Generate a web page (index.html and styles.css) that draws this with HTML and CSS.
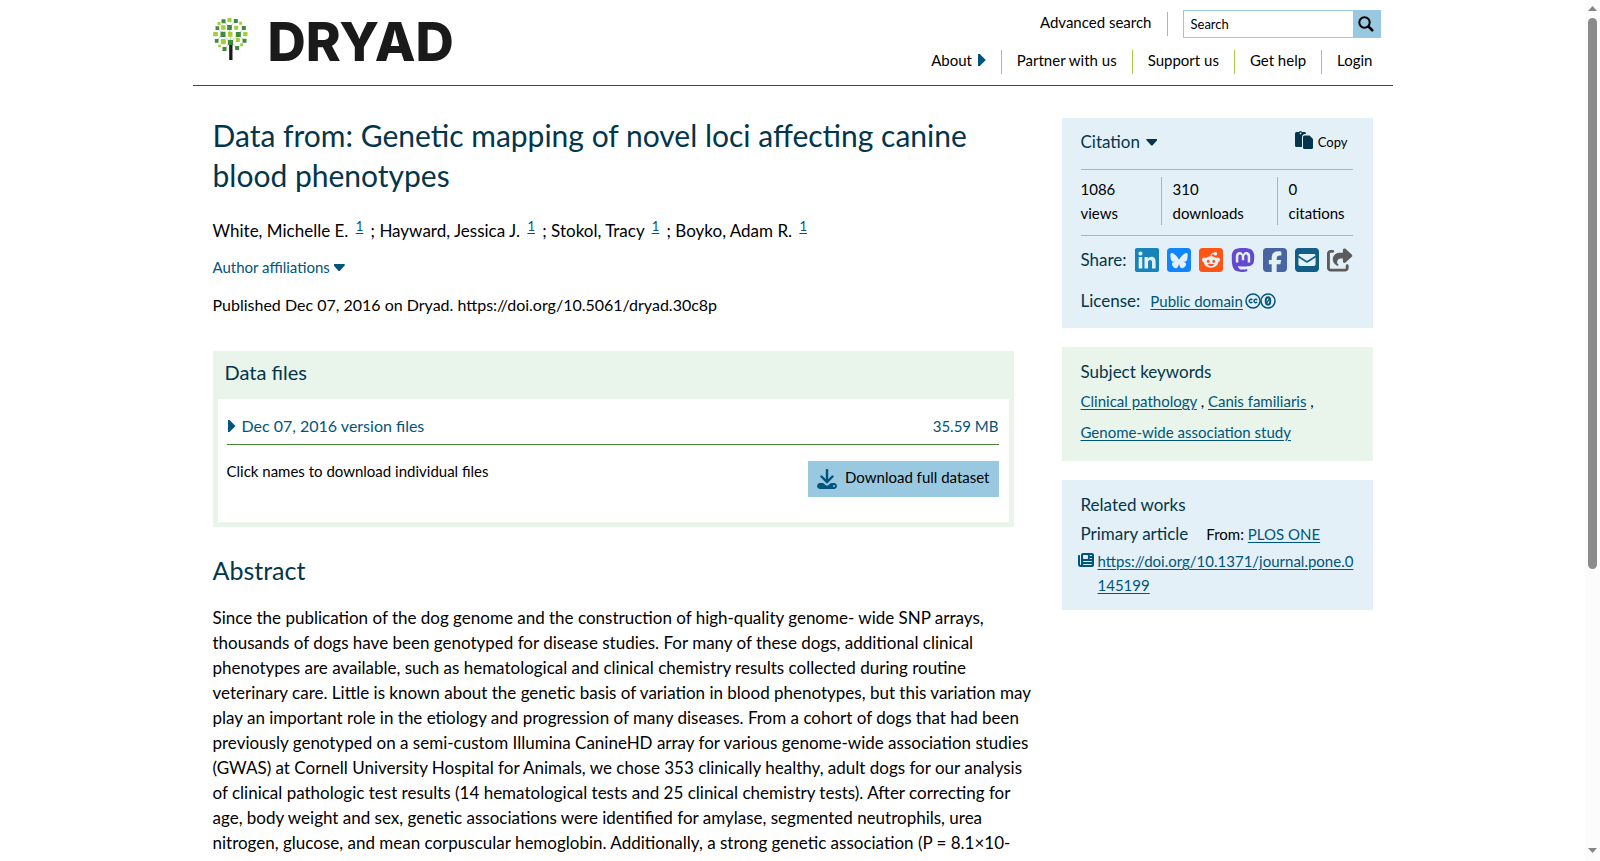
FILE: index.html
```html
<!DOCTYPE html>
<html lang="en">
<head>
  <meta charset="UTF-8">
  <meta name="viewport" content="width=device-width, initial-scale=1">
  <title>Dryad | Data from: Genetic mapping of novel loci affecting canine blood phenotypes</title>
  <link rel="stylesheet" href="styles.css">
</head>
<body>
  <header class="site-header">
    <a class="logo" href="#" aria-label="Dryad home">
      <svg class="logo-tree" viewBox="69 54 104 126" aria-hidden="true">
        <path d="M100 64 118 82 136 62M81 84l17 18M161 84l-17 19M79 122l19-20M163 122l-19-19M118 82l3 45M103 147l18-20 20 17M98 102l23 25 23-24" fill="none" stroke="#8fbf7a" stroke-width="2"/>
        <path fill="#1a1a1a" d="M117 133h10v47h-10z"/>
        <path fill="#a5cd39" d="M112 54h12v12h-12zM82 66h9v9h-9zM147 65h9v9h-9zM93 76h13v13H93zM132 77h12v12h-12zM69 96h14v13H69zM113 95h14v15h-14zM159 96h13v13h-13zM92 117h15v16H92zM137 114h12v12h-12zM84 134h8v8h-8zM150 130h9v9h-9z"/>
        <path fill="#3f8a3f" d="M94 58h12v12H94zM131 57h12v12h-12zM76 79h11v11H76zM111 75h14v15h-14zM155 78h12v12h-12zM91 95h15v16H91zM137 96h15v15h-15zM74 117h11v11H74zM157 116h12v12h-12zM113 120h16v15h-16zM97 141h12v12H97zM135 138h12v12h-12z"/>
      </svg>
      <span class="logo-text">DRYAD</span>
    </a>
    <div class="header-nav">
      <div class="nav-row">
        <a href="#">Advanced search</a>
        <form class="search">
          <input type="search" placeholder="Search" aria-label="Search">
          <button type="button" aria-label="Submit search">
            <svg viewBox="0 0 16 16" fill="none" stroke="#000" stroke-width="2"><circle cx="6.5" cy="6.5" r="5.2"/><path d="M10.3 10.3 15 15" stroke-width="2.6"/></svg>
          </button>
        </form>
      </div>
      <nav class="nav-row">
        <button class="menu" type="button">About <i class="caret-right"></i></button>
        <a href="#">Partner with us</a>
        <a href="#">Support us</a>
        <a href="#">Get help</a>
        <a href="#">Login</a>
      </nav>
    </div>
  </header>

  <div class="page">
    <main>
      <h1>Data from: Genetic mapping of novel loci affecting canine blood phenotypes</h1>
      <p class="authors">
        <span>White, Michelle E. <a href="#">1</a></span>
        <span>; Hayward, Jessica J. <a href="#">1</a></span>
        <span>; Stokol, Tracy <a href="#">1</a></span>
        <span>; Boyko, Adam R. <a href="#">1</a></span>
      </p>
      <button class="affiliations" type="button">Author affiliations <i class="caret-down"></i></button>
      <p class="published">Published Dec 07, 2016 on Dryad. https://doi.org/10.5061/dryad.30c8p</p>

      <section class="files">
        <h2>Data files</h2>
        <div class="files-inner">
          <button class="version" type="button">
            <i class="caret-right"></i>
            <span class="version-name">Dec 07, 2016 version files</span>
            <span>35.59 MB</span>
          </button>
          <div class="download">
            <p>Click names to download individual files</p>
            <button type="button">
              <svg viewBox="0 0 20 20" aria-hidden="true"><path d="M10 1v11M4.500 7.500 10 13l5.500-5.500" fill="none" stroke="#00557c" stroke-width="2.400" stroke-linecap="round"/><path fill="#00557c" d="M2.500 14H6l2.500 2q1.500 1 3 0L14 14h3.500Q20 14.500 20 17t-2.500 3h-15Q0 19.500 0 17t2.500-3z"/><circle cx="17" cy="17" r="1" fill="#98c9e1"/></svg>
              <span>Download full dataset</span>
            </button>
          </div>
        </div>
      </section>

      <h2 class="abstract-title">Abstract</h2>
      <p class="abstract">
        Since the publication of the dog genome and the construction of high-quality genome- wide SNP arrays,<br>
        thousands of dogs have been genotyped for disease studies. For many of these dogs, additional clinical<br>
        phenotypes are available, such as hematological and clinical chemistry results collected during routine<br>
        veterinary care. Little is known about the genetic basis of variation in blood phenotypes, but this variation may<br>
        play an important role in the etiology and progression of many diseases. From a cohort of dogs that had been<br>
        previously genotyped on a semi-custom Illumina CanineHD array for various genome-wide association studies<br>
        (GWAS) at Cornell University Hospital for Animals, we chose 353 clinically healthy, adult dogs for our analysis<br>
        of clinical pathologic test results (14 hematological tests and 25 clinical chemistry tests). After correcting for<br>
        age, body weight and sex, genetic associations were identified for amylase, segmented neutrophils, urea<br>
        nitrogen, glucose, and mean corpuscular hemoglobin. Additionally, a strong genetic association (P = 8.1×10-
      </p>
    </main>

    <aside>
      <section class="card citation-card">
        <div class="citation-head">
          <button class="citation" type="button">Citation <i class="caret-down"></i></button>
          <button class="copy" type="button">
            <svg viewBox="0 0 18 18" aria-hidden="true"><path fill="#03364b" fill-rule="evenodd" d="M1.500 1H4q1.500-2 3 0h2.500Q11 1 11 2.500V3H9.500Q7 3.500 7 6v10H1.500Q0 16 0 14.500v-12Q0 1 1.500 1zM5.500 1.500a.8.8 0 1 0 .1 0z"/><path fill="#03364b" d="M9.500 4.500h5L18 8v8.500q0 1.500-1.500 1.500h-7Q8 18 8 16.500V6q0-1.500 1.500-1.500z"/></svg>
            Copy
          </button>
        </div>
        <div class="stats">
          <div>1086<br>views</div>
          <div>310<br>downloads</div>
          <div>0<br>citations</div>
        </div>
        <div class="share">
          <span>Share:</span>
          <a href="#" aria-label="LinkedIn"><svg viewBox="0 32 448 448"><path fill="#1683bb" d="M416 32H31.900C14.300 32 0 46.500 0 64.300v383.400C0 465.500 14.300 480 31.900 480H416c17.600 0 32-14.500 32-32.300V64.300c0-17.800-14.400-32.300-32-32.300zM135.400 416H69V202.200h66.500V416zm-33.200-243c-21.300 0-38.500-17.300-38.500-38.500S80.900 96 102.200 96c21.200 0 38.500 17.300 38.500 38.500 0 21.300-17.200 38.500-38.500 38.500zm282.100 243h-66.400V312c0-24.800-.5-56.700-34.500-56.700-34.600 0-39.900 27-39.900 54.900V416h-66.400V202.200h63.700v29.200h.9c8.900-16.800 30.600-34.500 62.900-34.500 67.200 0 79.700 44.300 79.700 101.900V416z"/></svg></a>
          <a href="#" aria-label="Bluesky"><svg viewBox="0 0 24 24"><rect width="24" height="24" rx="3.500" fill="#1185fe"/><path fill="#e3f0f7" transform="translate(3.400 4) scale(.72)" d="M12 10.800c-1.087-2.114-4.046-6.053-6.798-7.995C2.566.944 1.561 1.266.902 1.565.139 1.908 0 3.080 0 3.768c0 .69.378 5.650.624 6.479.815 2.736 3.713 3.660 6.383 3.364-3.912.58-7.387 2.005-2.830 7.078 5.013 5.190 6.870-1.113 7.823-4.308.953 3.195 2.050 9.271 7.733 4.308 4.267-4.308 1.172-6.498-2.740-7.078 2.670.297 5.568-.628 6.383-3.364.246-.828.624-5.790.624-6.478 0-.69-.139-1.861-.902-2.206-.659-.298-1.664-.62-4.300 1.240C16.046 4.748 13.087 8.687 12 10.800Z"/></svg></a>
          <a href="#" aria-label="Reddit"><svg viewBox="0 0 24 24"><rect width="24" height="24" rx="3.500" fill="#ff5414"/><path d="M12 9q0-4 3.500-3.700" fill="none" stroke="#e3f0f7" stroke-width="1.200"/><g fill="#e3f0f7"><circle cx="16.400" cy="5.700" r="1.800"/><circle cx="5.200" cy="11.700" r="2.200"/><circle cx="18.800" cy="11.700" r="2.200"/><ellipse cx="12" cy="14" rx="7.300" ry="5.800"/></g><g fill="#ff5414"><ellipse cx="9.200" cy="13.300" rx="1.300" ry="1.600"/><ellipse cx="14.800" cy="13.300" rx="1.300" ry="1.600"/><path d="M8.700 16.200q3.300-1 6.600 0-1 2-3.300 2t-3.300-2z"/></g></svg></a>
          <a href="#" aria-label="Mastodon"><svg viewBox="0 32 448 448"><path fill="#6449d0" d="M433 179.110c0-97.200-63.710-125.700-63.710-125.700-62.520-28.700-228.560-28.400-290.480 0 0 0-63.720 28.500-63.720 125.700 0 115.700-6.600 259.400 105.630 289.100 40.510 10.700 75.320 13 103.330 11.400 50.810-2.800 79.320-18.100 79.320-18.100l-1.700-36.900s-36.310 11.400-77.120 10.100c-40.410-1.400-83-4.400-89.630-54a102.540 102.540 0 0 1-.9-13.900c85.630 20.900 158.650 9.100 178.750 6.700 56.120-6.700 105-41.300 111.230-72.900 9.800-49.800 9-121.500 9-121.500zm-75.120 125.200h-46.630v-114.200c0-49.700-64-51.600-64 6.900v62.500h-46.330V197c0-58.500-64-56.600-64-6.900v114.200H90.190c0-122.100-5.200-147.900 18.410-175 25.900-28.900 79.820-30.800 103.830 6.100l11.600 19.500 11.600-19.500c24.110-37.100 78.120-34.800 103.830-6.100 23.710 27.300 18.400 53 18.400 175z"/></svg></a>
          <a href="#" aria-label="Facebook"><svg viewBox="0 32 448 448"><path fill="#4865a2" d="M64 32C28.700 32 0 60.700 0 96V416c0 35.300 28.700 64 64 64h98.200V334.200H109.400V256h52.800V222.300c0-87.100 39.400-127.500 125-127.500c16.200 0 44.200 3.200 55.700 6.400V172c-6-.6-16.500-1-29.600-1c-42 0-58.200 15.900-58.200 57.200V256h83.600l-14.400 78.200H255V480H384c35.300 0 64-28.700 64-64V96c0-35.300-28.700-64-64-64H64z"/></svg></a>
          <a href="#" aria-label="Email"><svg viewBox="0 32 448 448"><path fill="#125e86" d="M64 32C28.700 32 0 60.700 0 96V416c0 35.300 28.700 64 64 64H384c35.300 0 64-28.700 64-64V96c0-35.300-28.700-64-64-64H64zM218 271.700L64.200 172.400C66 156.400 79.500 144 96 144H352c16.500 0 30 12.400 31.800 28.400L230 271.700c-1.800 1.200-3.900 1.800-6 1.800s-4.200-.6-6-1.800zm29.400 26.900L384 210.400V336c0 17.700-14.300 32-32 32H96c-17.700 0-32-14.300-32-32V210.400l136.600 88.200c7 4.500 15.100 6.900 23.400 6.900s16.400-2.400 23.400-6.900z"/></svg></a>
          <a href="#" aria-label="Share link"><svg class="wide" viewBox="0 0 576 512"><path fill="#5c5c5c" d="M352 224H305.500c-45 0-81.500 36.500-81.500 81.500c0 22.300 10.300 34.300 19.200 40.500c6.800 4.700 12.800 12 12.800 20.300c0 9.800-8 17.800-17.800 17.800h-2.500c-2.400 0-4.800-.4-7.100-1.400C210.800 374.800 128 333.400 128 240c0-79.500 64.500-144 144-144h80V34.700C352 15.500 367.500 0 386.700 0c8.600 0 16.800 3.200 23.200 8.900L548.100 133.300c7.600 6.800 11.900 16.500 11.900 26.700s-4.300 19.900-11.900 26.700l-139 125.100c-5.900 5.300-13.500 8.200-21.400 8.200H384c-17.700 0-32-14.300-32-32V224zM80 96c-8.800 0-16 7.200-16 16V432c0 8.800 7.200 16 16 16H400c8.800 0 16-7.200 16-16V384c0-17.700 14.300-32 32-32s32 14.300 32 32v48c0 44.200-35.800 80-80 80H80c-44.200 0-80-35.800-80-80V112C0 67.800 35.800 32 80 32h48c17.700 0 32 14.300 32 32s-14.300 32-32 32H80z"/></svg></a>
        </div>
        <div class="license">
          <span>License:</span>
          <a href="#">Public domain</a>
          <svg viewBox="0 0 31 16" aria-hidden="true"><g fill="none" stroke="#00557c" stroke-width="1.500"><circle cx="8" cy="8" r="7"/><circle cx="23" cy="8" r="7"/><ellipse cx="23" cy="8" rx="2.300" ry="3.700" stroke-width="1.900"/><path d="m21.800 9.800 2.400-3.600" stroke-width="1.200"/><path d="M7.300 6.900a1.700 1.700 0 1 0 0 2.200M12.100 6.900a1.700 1.700 0 1 0 0 2.200"/></g></svg>
        </div>
      </section>

      <section class="card keywords">
        <h3>Subject keywords</h3>
        <p><a href="#">Clinical pathology</a> , <a href="#">Canis familiaris</a> ,<br><a href="#">Genome-wide association study</a></p>
      </section>

      <section class="card">
        <h3>Related works</h3>
        <div class="related-type"><h4>Primary article</h4><span>From: <a href="#">PLOS ONE</a></span></div>
        <div class="related-link">
          <svg viewBox="0 32 512 448" aria-hidden="true"><path fill="#00557c" d="M96 96c0-35.300 28.700-64 64-64H448c35.300 0 64 28.700 64 64V416c0 35.300-28.700 64-64 64H80c-44.200 0-80-35.800-80-80V128c0-17.700 14.300-32 32-32s32 14.300 32 32V400c0 8.800 7.200 16 16 16s16-7.200 16-16V96zm64 24v80c0 13.300 10.700 24 24 24H296c13.300 0 24-10.700 24-24V120c0-13.300-10.700-24-24-24H184c-13.300 0-24 10.700-24 24zm208-8c0 8.800 7.200 16 16 16h48c8.800 0 16-7.200 16-16s-7.200-16-16-16H384c-8.800 0-16 7.200-16 16zm0 96c0 8.800 7.200 16 16 16h48c8.800 0 16-7.200 16-16s-7.200-16-16-16H384c-8.800 0-16 7.200-16 16zM160 304c0 8.800 7.200 16 16 16H432c8.800 0 16-7.200 16-16s-7.200-16-16-16H176c-8.800 0-16 7.200-16 16zm0 96c0 8.800 7.200 16 16 16H432c8.800 0 16-7.200 16-16s-7.200-16-16-16H176c-8.800 0-16 7.200-16 16z"/></svg>
          <a href="#">https://doi.org/10.1371/journal.pone.0145199</a>
        </div>
      </section>
    </aside>
  </div>

  <div class="scrollbar" aria-hidden="true">
    <i class="arrow up"></i>
    <div class="track"><div class="thumb"></div></div>
    <i class="arrow down"></i>
  </div>
</body>
</html>
```
FILE: styles.css
```css
:root {
  --blue: #00557c;
  --navy: #03364b;
  --lime: #a7cd45;
  --pale-blue: #e3f0f7;
  --pale-green: #e9f4ea;
  --sky: #98c9e1;
}
* {
  box-sizing: border-box;
}
body {
  margin: 0;
  padding-right: 15px;
  background: #fff;
  color: #000;
  font-family: Lato, sans-serif;
  font-size: 15px;
  line-height: 24px;
}
h1, h2, h3, h4, p {
  margin: 0;
  font-weight: 400;
}
h1, h2, h3, h4 {
  color: var(--navy);
}
a {
  color: var(--blue);
  text-underline-offset: 2px;
}
button, input {
  font: inherit;
  color: inherit;
}
button {
  padding: 0;
  border: 0;
  background: none;
  cursor: pointer;
}
svg {
  display: block;
  flex-shrink: 0;
}
.caret-right, .caret-down {
  display: inline-block;
  flex-shrink: 0;
  background: currentColor;
}
.caret-right {
  width: 8px;
  height: 12px;
  clip-path: polygon(0 0, 25% 0, 100% 50%, 25% 100%, 0 100%);
}
.caret-down {
  width: 11px;
  height: 7px;
  vertical-align: 2px;
  clip-path: polygon(0 0, 100% 0, 100% 20%, 55% 100%, 45% 100%, 0 20%);
}

.site-header {
  display: flex;
  justify-content: space-between;
  max-width: 1200px;
  height: 86px;
  margin: 0 auto;
  padding: 10px 12px 0 20px;
  border-bottom: 1px solid #444;
}
.logo {
  display: flex;
  gap: 20px;
  padding-top: 8px;
  color: #1a1a1a;
  text-decoration: none;
}
.logo-tree {
  width: 35px;
  height: 42px;
}
.logo-text {
  font-family: Inter, sans-serif;
  font-size: 53px;
  font-weight: 800;
  line-height: 48px;
}
.header-nav {
  display: flex;
  flex-direction: column;
  gap: 12px;
}
.nav-row {
  display: flex;
  justify-content: flex-end;
  align-items: center;
}
.nav-row > a, .menu {
  padding: 0 15px 4px;
  border-right: 1px solid var(--lime);
  color: #000;
  line-height: 20px;
  text-decoration: none;
}
.nav-row > a:last-child {
  padding-right: 8px;
  border-right: 0;
}
.menu .caret-right {
  margin-left: 2px;
  color: var(--blue);
}
.search {
  display: flex;
  width: 198px;
  height: 28px;
  margin-left: 15px;
  border: 1px solid var(--sky);
}
.search input {
  flex: 1;
  min-width: 0;
  padding: 0 7px;
  border: 0;
  background: #fff;
  font-size: 13px;
}
.search input::placeholder {
  color: #000;
}
.search button {
  display: grid;
  place-items: center;
  width: 27px;
  background: var(--sky);
}
.search svg {
  width: 16px;
  height: 16px;
}

.page {
  display: grid;
  grid-template-columns: minmax(0, 1fr) 311px;
  align-items: start;
  gap: 48px;
  max-width: 1200px;
  margin: 0 auto;
  padding: 29px 20px 40px;
}
h1 {
  font-size: 30px;
  line-height: 40px;
}
.authors {
  margin-top: 24px;
  font-size: 17px;
  line-height: 24px;
}
.authors a {
  margin: 0 3px;
  font-size: 13px;
  vertical-align: 6px;
  line-height: 12px;
}
.affiliations {
  display: block;
  margin-top: 12px;
  color: var(--blue);
}
.published {
  margin-top: 14px;
  font-size: 16px;
}
.files {
  margin-top: 34px;
  padding: 0 5px 5px;
  background: var(--pale-green);
}
.files h2 {
  padding: 5px 7px 11px;
  font-size: 20px;
  line-height: 32px;
}
.files-inner {
  padding: 14px 10px 25px 9px;
  background: #fff;
}
.version {
  display: flex;
  align-items: center;
  gap: 6px;
  width: 100%;
  height: 32px;
  padding: 0 0 5px 1px;
  border-bottom: 1px solid #478838;
  color: var(--blue);
  text-align: left;
}
.version-name {
  flex: 1;
  font-size: 16px;
}
.download {
  display: flex;
  justify-content: space-between;
  padding-top: 16px;
}
.download p {
  line-height: 20px;
}
.download button {
  display: flex;
  align-items: center;
  gap: 8px;
  height: 36px;
  padding: 0 9px;
  background: var(--sky);
}
.download span {
  padding-bottom: 4px;
}
.download svg {
  width: 20px;
  height: 20px;
}
.abstract-title {
  margin-top: 27px;
  font-size: 25px;
  line-height: 32px;
}
/* lines are broken by hand, the longest may run a little into the gutter */
.abstract {
  margin: 19px -24px 0 0;
  font-size: 17px;
  line-height: 25px;
}

aside {
  display: grid;
  gap: 19px;
  padding-top: 3px;
}
.card {
  padding: 12px 20px 13px 19px;
  background: var(--pale-blue);
}
.card h3, .card h4 {
  font-size: 17px;
  line-height: 26px;
}
.citation-card {
  padding-bottom: 11px;
}
.citation-head {
  display: flex;
  justify-content: space-between;
  align-items: center;
  height: 39px;
  padding: 0 5px 16px 0;
}
.citation {
  color: var(--navy);
  font-size: 17px;
}
.citation .caret-down {
  margin-left: 2px;
}
.copy {
  display: flex;
  align-items: center;
  gap: 5px;
  font-size: 13px;
}
.copy svg {
  width: 18px;
  height: 18px;
  margin-bottom: 4px;
}
.stats {
  display: grid;
  grid-template-columns: 80fr 116fr 76fr;
  padding: 7px 0 10px;
  border: solid var(--lime);
  border-width: 1px 0;
}
.stats div + div {
  padding-left: 11px;
  border-left: 1px solid var(--lime);
}
.share {
  display: flex;
  justify-content: space-between;
  align-items: center;
  height: 48px;
  margin-right: -1px;
  color: var(--navy);
  font-size: 17px;
}
.share svg {
  width: 24px;
  height: 24px;
}
.share .wide {
  width: 26px;
}
.license {
  display: flex;
  align-items: center;
  height: 33px;
  color: var(--navy);
  font-size: 17px;
}
.license a {
  margin: 0 2px 0 10px;
  font-size: 15px;
}
.license svg {
  width: 31px;
  height: 16px;
}
.keywords {
  background: var(--pale-green);
}
.keywords p {
  margin-top: 1px;
  line-height: 31px;
}
.related-type {
  display: flex;
  gap: 18px;
  align-items: baseline;
  margin-top: 3px;
}
.related-link {
  display: flex;
  gap: 4px;
  margin: 2px -2px 0 -3px;
}
.related-link svg {
  width: 16px;
  height: 14px;
  margin-top: 4px;
}
.related-link a {
  min-width: 0;
  overflow-wrap: anywhere;
}

.scrollbar {
  position: fixed;
  top: 0;
  right: 0;
  bottom: 0;
  display: flex;
  flex-direction: column;
  align-items: center;
  width: 15px;
  padding: 6px 0 8px;
  background: #fcfcfc;
}
.track {
  flex: 1;
  width: 9px;
  margin: 7px 0 8px;
}
.thumb {
  height: 67%;
  border-radius: 5px;
  background: #8b8b8b;
}
.arrow {
  width: 9px;
  height: 5px;
  background: #858585;
}
.up {
  clip-path: polygon(50% 0, 100% 100%, 0 100%);
}
.down {
  clip-path: polygon(0 0, 100% 0, 50% 100%);
}
```
